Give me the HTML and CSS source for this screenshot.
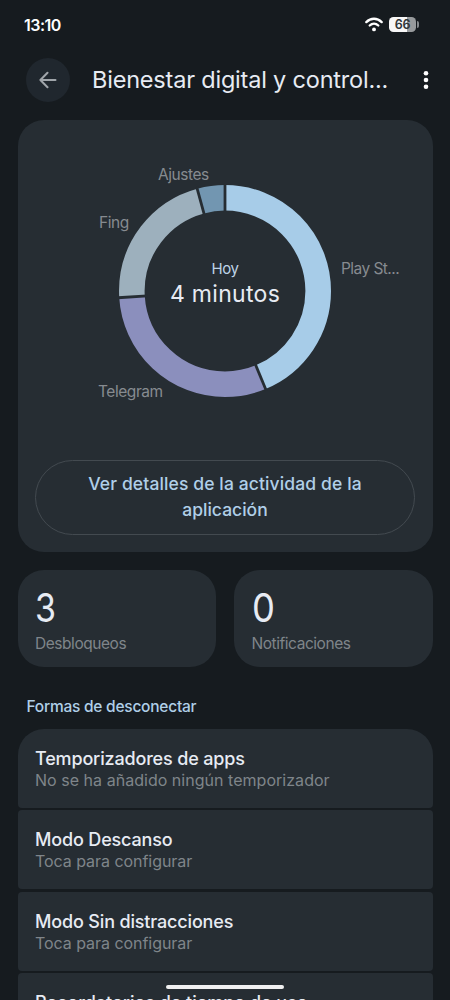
FILE: index.html
```html
<!DOCTYPE html>
<html lang="es">
<head>
<meta charset="utf-8">
<meta name="viewport" content="width=device-width">
<title>Bienestar digital</title>
<link rel="stylesheet" href="styles.css">
</head>
<body>
<div class="screen">
  <header class="status">
    <span class="clock">13:10</span>
    <div class="status-icons">
      <svg class="wifi" width="18" height="15" viewBox="0 0 18 15" fill="none" stroke="#fff" stroke-width="2.3" stroke-linecap="round"><path d="M1.3 5.1C5.8 .6 12.2 .6 16.7 5.1"/><path d="M4.7 8.5C7.2 6.1 10.8 6.1 13.3 8.5"/><circle cx="9" cy="12.4" r="1.9" fill="#fff" stroke="none"/></svg>
      <div class="battery"><span class="level">66</span><i class="tip"></i></div>
    </div>
  </header>
  <div class="appbar">
    <div class="back"><svg width="18" height="18" viewBox="0 0 18 18" fill="none" stroke="#a0a5aa" stroke-width="2" stroke-linecap="round" stroke-linejoin="round"><path d="M16.5 9H1.6M8.5 1.8L1.4 9l7.1 7.2"/></svg></div>
    <h1 class="title">Bienestar digital y control...</h1>
    <svg class="more" width="6" height="20" viewBox="0 0 6 20" fill="#fff"><circle cx="3" cy="3.2" r="2.3"/><circle cx="3" cy="10" r="2.3"/><circle cx="3" cy="16.8" r="2.3"/></svg>
  </div>
  <main class="content">
    <section class="usage card">
      <div class="chart">
        <svg class="ring" width="214" height="214" viewBox="-107 -107 214 214">
          <g fill="none" stroke-width="25.6" transform="rotate(-90)">
            <circle r="93.2" pathLength="360" stroke="#a7cce8" stroke-dasharray="157.5 202.5"/>
            <circle r="93.2" pathLength="360" stroke="#8b8fbd" stroke-dasharray="108.9 251.1" stroke-dashoffset="-157.5"/>
            <circle r="93.2" pathLength="360" stroke="#9db0bd" stroke-dasharray="78.4 281.6" stroke-dashoffset="-266.4"/>
            <circle r="93.2" pathLength="360" stroke="#7296b1" stroke-dasharray="15.2 344.8" stroke-dashoffset="-344.8"/>
          </g>
          <g stroke="#262d33" stroke-width="2.8">
            <path d="M0-78V-108"/>
            <path d="M0-78V-108" transform="rotate(157.5)"/>
            <path d="M0-78V-108" transform="rotate(266.4)"/>
            <path d="M0-78V-108" transform="rotate(344.8)"/>
          </g>
        </svg>
        <div class="total"><span class="day">Hoy</span><span class="time">4 minutos</span></div>
        <span class="label ajustes">Ajustes</span>
        <span class="label fing">Fing</span>
        <span class="label play">Play St...</span>
        <span class="label telegram">Telegram</span>
      </div>
      <div class="details"><span class="line1">Ver detalles de la actividad de la</span><span class="line2">aplicación</span></div>
    </section>
    <section class="stats">
      <div class="stat card"><span class="number">3</span><span class="caption">Desbloqueos</span></div>
      <div class="stat card"><span class="number zero">0</span><span class="caption">Notificaciones</span></div>
    </section>
    <h2 class="heading">Formas de desconectar</h2>
    <section class="list">
      <div class="row"><span class="name">Temporizadores de apps</span><span class="hint none">No se ha añadido ningún temporizador</span></div>
      <div class="row"><span class="name">Modo Descanso</span><span class="hint">Toca para configurar</span></div>
      <div class="row"><span class="name">Modo Sin distracciones</span><span class="hint">Toca para configurar</span></div>
      <div class="row"><span class="name reminders">Recordatorios de tiempo de uso</span></div>
    </section>
  </main>
  <div class="home-bar"></div>
</div>
</body>
</html>
```
FILE: styles.css
```css
* { box-sizing: border-box; }
body { margin: 0; background: #161b1f; font-family: Inter, "Open Sans", sans-serif; color: #e7ebf3; }
.screen { position: relative; width: 450px; height: 1000px; overflow: hidden; background: #161b1f; }
span, h1, h2 { white-space: nowrap; }

.status { height: 49px; padding: 0 34px 0 24px; display: flex; align-items: center; justify-content: space-between; }
.clock { font-size: 16px; font-weight: 600; letter-spacing: -.5px; color: #fff; }
.status-icons { display: flex; align-items: center; gap: 6px; }
.battery { position: relative; width: 27px; height: 15px; border-radius: 4.5px; background: linear-gradient(90deg, #f7f7f7 0 18px, #979a9c 18px); display: flex; justify-content: center; align-items: center; }
.level { font-size: 12.5px; font-weight: 600; line-height: 15px; letter-spacing: -.3px; color: #30363a; }
.tip { position: absolute; left: 28px; top: 4px; width: 2px; height: 7px; border-radius: 0 2px 2px 0; background: #85898c; }

.appbar { height: 61px; padding: 0 21px 0 26px; display: flex; align-items: center; }
.back { width: 44px; height: 44px; border-radius: 50%; background: #20272e; display: grid; place-items: center; }
.title { margin: 0 0 0 22px; width: 309px; font-size: 23.5px; line-height: 30px; font-weight: 400; letter-spacing: -.2px; flex: none; }
.more { margin-left: 22px; flex: none; }

.content { padding: 9.5px 17.5px 0; }
.card { background: #262d33; border-radius: 26px; }
.usage { height: 432.5px; padding: 64.5px 17.5px 17.5px; display: flex; flex-direction: column; justify-content: space-between; }
.chart { position: relative; height: 214px; display: grid; place-items: center; }
.ring { grid-area: 1 / 1; }
.total { grid-area: 1 / 1; display: flex; flex-direction: column; align-items: center; padding-bottom: 14px; }
.day { font-size: 15px; line-height: 20px; letter-spacing: -.4px; color: #bdd3e6; }
.time { font-size: 23px; line-height: 31px; letter-spacing: .3px; }
.label { position: absolute; font-size: 15.5px; line-height: 20px; letter-spacing: -.45px; color: #868b90; }
.ajustes { left: 123px; top: -19px; }
.fing { left: 64px; top: 29px; }
.play { left: 306px; top: 75px; letter-spacing: -.55px; }
.telegram { left: 63px; top: 198px; }
.details { height: 75px; border: 1px solid #434a50; border-radius: 38px; display: flex; flex-direction: column; justify-content: center; align-items: center; font-size: 17.5px; line-height: 26px; font-weight: 500; color: #b0cfe8; }
.line1 { letter-spacing: .12px; }

.stats { margin-top: 18px; display: grid; grid-template-columns: 1fr 1fr; gap: 18px; }
.stat { height: 97px; padding: 17px 17.5px 0; display: flex; flex-direction: column; align-items: flex-start; }
.number { font-size: 39.5px; line-height: 42px; transform: scaleX(.86); transform-origin: left; }
.zero { transform: scaleX(.92); }
.caption { margin-top: 5px; font-size: 15.5px; line-height: 20px; letter-spacing: -.45px; color: #7f858a; }

.heading { margin: 30px 0 12px 9px; font-size: 15.5px; line-height: 20px; font-weight: 500; letter-spacing: -.24px; color: #b0cfe8; }
.list { display: grid; gap: 2.3px; }
.row { height: 79px; padding: 18px 17.5px 0; background: #262d33; border-radius: 4px; display: flex; flex-direction: column; }
.row:first-child { border-radius: 26px 26px 4px 4px; }
.name { font-size: 18px; line-height: 23px; font-weight: 500; letter-spacing: -.16px; }
.reminders { letter-spacing: -.03px; }
.hint { font-size: 16px; line-height: 21px; letter-spacing: -.05px; color: #7f858a; }
.none { letter-spacing: .03px; }
.home-bar { position: absolute; left: 166px; top: 985px; width: 118px; height: 4px; border-radius: 2px; background: #f0f0f1; }
```
